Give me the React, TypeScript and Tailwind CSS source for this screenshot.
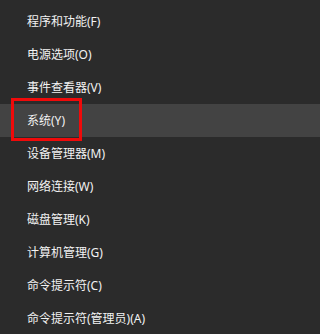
const items = [
  "程序和功能(F)",
  "电源选项(O)",
  "事件查看器(V)",
  "系统(Y)",
  "设备管理器(M)",
  "网络连接(W)",
  "磁盘管理(K)",
  "计算机管理(G)",
  "命令提示符(C)",
  "命令提示符(管理员)(A)",
]

export default function App() {
  return (
    <div
      className="w-full min-h-screen h-[334px] overflow-hidden bg-[#2b2b2b] pt-[5px] text-[12px] text-[#f2f2f2]"
      style={{ fontFamily: '"Noto Sans", "Noto Sans CJK SC", sans-serif' }}
    >
      {items.map((label, i) => (
        <div
          key={label}
          className={`relative flex h-[33px] items-center pl-[27px] ${i === 3 ? "bg-[#434343]" : ""}`}
        >
          <span>{label}</span>
          {/* red highlight box */}
          {i === 3 && (
            <div className="absolute left-[11px] top-[-6px] h-[43px] w-[71px] border-[3px] border-[#f00a0a]" />
          )}
        </div>
      ))}
    </div>
  )
}
